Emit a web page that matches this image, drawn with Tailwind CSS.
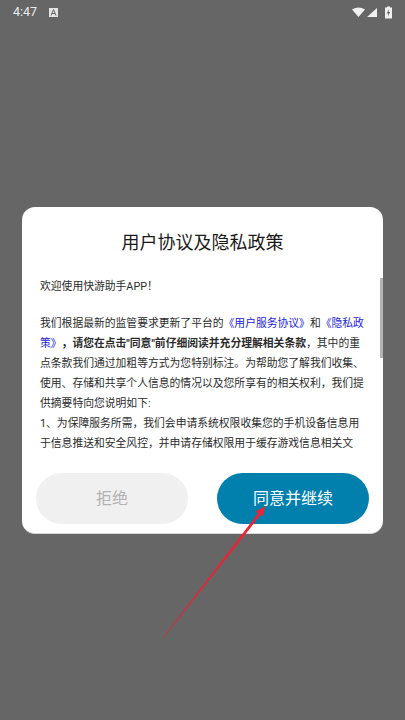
<!DOCTYPE html>
<html lang="zh">
<head>
<meta charset="utf-8">
<title>用户协议及隐私政策</title>
<script src="https://cdn.jsdelivr.net/npm/@tailwindcss/browser@4"></script>
</head>
<body class="bg-[#666666] font-['Roboto','Noto_Sans_CJK_SC',sans-serif]">
<div class="relative w-[405px] h-[720px] overflow-hidden">

    <!-- status bar -->
    <div class="flex items-center h-[24px] pl-[13px] pr-[13px] text-[#ededed]">
        <span class="text-[12.5px] leading-none">4:47</span>
        <svg class="ml-[12px]" width="9" height="9" viewBox="0 0 9 9"><rect width="9" height="9" fill="#e4e4e4"/><path d="M2 7.500 4.500 1.500 7 7.500M3 5.500h3" fill="none" stroke="#666" stroke-width="1"/></svg>
        <svg class="ml-auto" width="40" height="13" viewBox="0 0 40 13">
            <path d="M0 3.500Q6.500 -0.500 13 3.500L6.500 11Z" fill="#f0f0f0"/>
            <path d="M15 11 25 2V11Z" fill="#f0f0f0"/>
            <path d="M33 1.500h2V0.500h3v1h2V12.500h-7Z" fill="#f0f0f0"/>
            <path d="M37 3 34.800 7.500H36.300L35.800 10.500 38.200 6H36.700Z" fill="#666"/>
        </svg>
    </div>

    <!-- dialog -->
    <div class="relative mt-[183px] ml-[22px] w-[361px] h-[327px] bg-white rounded-[13px] overflow-hidden border-b border-[#d8d8d8]">
        <h1 class="pt-[25px] text-center text-[18px] leading-[22px] font-normal text-[#1a1a1a]">用户协议及隐私政策</h1>

        <div class="mt-[23px] mx-[18px] h-[177px] overflow-hidden text-[10.8px] leading-[20px] text-[#2b2b2b] [text-spacing-trim:space-all]">
            <p>欢迎使用快游助手APP！</p>
            <p class="mt-[17px]">我们根据最新的监管要求更新了平台的<span class="text-[#2222dd]">《用户服务协议》</span>和<span class="text-[#2222dd]">《隐私政策》</span><b class="font-bold">，请您在点击"同意"前仔细阅读并充分理解相关条款</b>，其中的重点条款我们通过加粗等方式为您特别标注。为帮助您了解我们收集、使用、存储和共享个人信息的情况以及您所享有的相关权利，我们提供摘要特向您说明如下:</p>
            <p>1、为保障服务所需，我们会申请系统权限收集您的手机设备信息用于信息推送和安全风控，并申请存储权限用于缓存游戏信息相关文件，</p>
        </div>

        <!-- scrollbar -->
        <div class="absolute right-0 top-[71px] w-[3px] h-[80px] bg-[#b4b4b4]"></div>

        <div class="flex justify-between mt-[19px] mx-[14px]">
            <button class="w-[152px] h-[51px] rounded-full bg-[#f0f0f0] text-[16px] text-[#b3b3b3]">拒绝</button>
            <button class="w-[152px] h-[51px] rounded-full bg-[#0180ae] text-[16px] text-white">同意并继续</button>
        </div>
    </div>

    <!-- red arrow drawn over the screenshot -->
    <svg class="absolute left-0 top-0" width="405" height="720" viewBox="0 0 405 720">
        <path d="M162.800 638 258 513.500 256 511.500 265.500 506 263 516 260.500 515 163.200 638.300Z" fill="#ee2233"/>
    </svg>
</div>
</body>
</html>
